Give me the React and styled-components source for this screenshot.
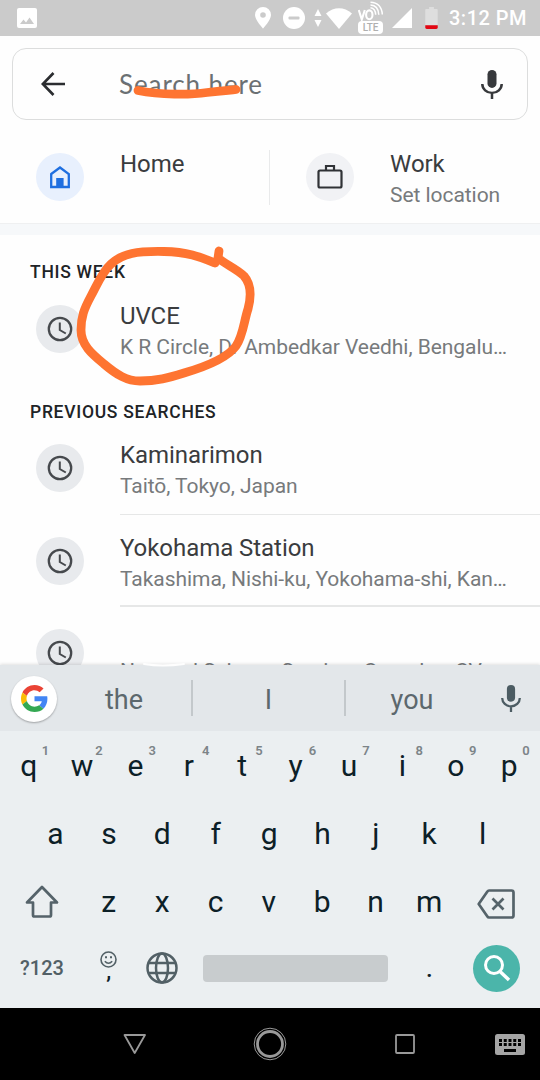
import React from 'react';
import styled, { createGlobalStyle } from 'styled-components';

const Global = createGlobalStyle`
  * { box-sizing: border-box; }
  body { margin: 0; background: #fff; font-family: Roboto, sans-serif; }
  svg { display: block; flex: none; }
`;

const Screen = styled.main`
  position: relative;
  width: 540px;
  height: 1080px;
  overflow: hidden;
  display: flex;
  flex-direction: column;
  background: #fefefe;
`;

const StatusBar = styled.header`
  height: 36px;
  flex: none;
  display: flex;
  align-items: center;
  justify-content: space-between;
  padding: 0 13px 0 17px;
  background: #cbcbcb;
  color: #fff;
`;
const StatusGroup = styled.div`
  display: flex;
  align-items: center;
`;
const StatusIcon = styled.svg`
  margin-right: ${(p) => p.$gap || 0}px;
`;
const VoLte = styled.div`
  width: 26px;
  height: 34px;
  margin-right: 8px;
  display: flex;
  flex-direction: column;
`;
const LteTag = styled.span`
  height: 13px;
  width: 25px;
  border-radius: 4px;
  background: #fff;
  color: #b0b0b0;
  font: 500 10px/13px Roboto, sans-serif;
  letter-spacing: -0.2px;
  text-align: center;
`;
const Time = styled.span`
  width: 78px;
  font: 500 20px/36px Roboto, sans-serif;
  letter-spacing: 0.5px;
  white-space: nowrap;
`;

const SearchBox = styled.div`
  height: 72px;
  flex: none;
  margin: 12px 12px 0;
  padding: 0 24px 0 28px;
  border: 1.5px solid #dcdddd;
  border-radius: 14px;
  display: flex;
  align-items: center;
`;
const SearchText = styled.span`
  flex: 1;
  margin-left: 54px;
  font: 400 26px/36px Lato, sans-serif;
  letter-spacing: 0.9px;
  color: #6b7073;
`;

const Shortcuts = styled.section`
  height: 103px;
  flex: none;
  display: flex;
`;
const Shortcut = styled.div`
  width: 270px;
  padding: 29px 0 0 36px;
  display: flex;
`;
const ShortcutRule = styled.div`
  width: 1px;
  height: 55px;
  margin: 30px 0 0 -1px;
  background: #e9eaeb;
`;
const Badge = styled.div`
  width: 48px;
  height: 48px;
  flex: none;
  margin-top: ${(p) => p.$top || 0}px;
  border-radius: 50%;
  display: flex;
  align-items: center;
  justify-content: center;
  background: ${(p) => p.$tone || '#e8eaed'};
`;
const Labels = styled.div`
  min-width: 0;
  margin-left: 36px;
`;
const Title = styled.div`
  height: 30px;
  font-size: 24px;
  line-height: 30px;
  letter-spacing: -0.05px;
  color: #3a3c3e;
  white-space: nowrap;
`;
const Subtitle = styled.div`
  font-size: 21px;
  line-height: 32px;
  letter-spacing: -0.05px;
  color: #777a7c;
  white-space: nowrap;
`;

const Band = styled.div`
  height: 12px;
  flex: none;
  background: #f6f8fa;
  border-top: 1px solid #eff0f1;
`;

const Results = styled.section`
  height: 430px;
  flex: none;
  overflow: hidden;
`;
const SectionHead = styled.h2`
  margin: 0;
  height: ${(p) => p.$height}px;
  padding: ${(p) => p.$top}px 0 0 30px;
  font: 500 17.5px/22px Roboto, sans-serif;
  letter-spacing: 0.72px;
  color: #202326;
`;
const Result = styled.div`
  height: ${(p) => p.$height || 92.5}px;
  padding-left: 36px;
  display: flex;
`;
const ResultBody = styled.div`
  flex: 1;
  min-width: 0;
  margin-left: 36px;
  padding-top: 18px;
  border-bottom: ${(p) => (p.$rule ? `${p.$rule}px solid #e6e7e7` : '0')};
`;
const Erased = styled.span`
  background: #fefefe;
  color: transparent;
`;

const Keyboard = styled.section`
  height: 343px;
  flex: none;
  background: #ebeff1;
  box-shadow: 0 -1px 3px rgba(0, 0, 0, 0.12);
  position: relative;
`;
const Suggestions = styled.div`
  height: 66px;
  display: flex;
  align-items: center;
  background: #e3e7ea;
  padding: 0 19px 0 11px;
`;
const GoogleButton = styled.div`
  width: 46px;
  height: 46px;
  margin-top: 1px;
  border-radius: 50%;
  background: #fff;
  box-shadow: 0 1px 2px rgba(0, 0, 0, 0.3);
  display: flex;
  align-items: center;
  justify-content: center;
`;
const Word = styled.span`
  width: ${(p) => p.$width}px;
  padding-top: 4px;
  text-align: center;
  font-size: 27px;
  line-height: 34px;
  color: #5c686d;
`;
const WordRule = styled.i`
  width: 2px;
  height: 36px;
  background: #c3c8cb;
`;
const KeyRow = styled.div`
  height: 68.5px;
  padding: 0 ${(p) => p.$side || 2}px ${(p) => p.$lift || 0}px;
  display: flex;
  align-items: center;
`;
const Key = styled.div`
  position: relative;
  width: 53.4px;
  flex: none;
  text-align: center;
  font-size: 30px;
  line-height: 69px;
  color: #0c2027;
`;
const Hint = styled.sup`
  position: absolute;
  left: 37.5px;
  top: 12px;
  width: 12px;
  font: 600 13px/16px Roboto, sans-serif;
  color: #7c8488;
`;
const SymbolKey = styled.div`
  width: 80px;
  text-align: center;
  font: 500 20px/30px Roboto, sans-serif;
  color: #526066;
`;
const IconKey = styled.div`
  width: ${(p) => p.$width}px;
  padding-top: ${(p) => p.$drop || 0}px;
  display: flex;
  flex-direction: column;
  align-items: center;
`;
const Comma = styled.span`
  height: 18px;
  font: 500 22px/8px Roboto, sans-serif;
  color: #0c2027;
`;
const Space = styled.div`
  width: 185px;
  height: 27px;
  margin-left: 14px;
  border-radius: 4px;
  background: #c8ccce;
`;
const Period = styled.div`
  width: 83px;
  padding-top: 2px;
  text-align: center;
  font: 500 24px/30px Roboto, sans-serif;
  color: #0c2027;
`;
const Go = styled.div`
  width: 47px;
  height: 47px;
  margin-left: 2.5px;
  border-radius: 50%;
  background: #4bb5aa;
  display: flex;
  align-items: center;
  justify-content: center;
`;

const NavBar = styled.nav`
  height: 72px;
  flex: none;
  background: #000;
  display: flex;
  align-items: center;
  padding: 0 15px 0 123px;
`;
const NavIcon = styled.svg`
  margin-right: ${(p) => p.$gap || 0}px;
`;

const Ink = styled.svg`
  position: absolute;
  left: 0;
  top: 0;
  pointer-events: none;
`;

const Mic = ({ color, width, height }) => (
  <svg width={width} height={height} viewBox="0 0 22 30" preserveAspectRatio="none">
    <rect x="6.5" y="0" width="9" height="18.5" rx="4.5" fill={color} />
    <path d="M1.3 14.5a9.7 9.2 0 0 0 19.4 0M11 23.5V30" fill="none" stroke={color} strokeWidth="2.5" />
  </svg>
);

const Clock = () => (
  <svg width="26" height="26" viewBox="0 0 26 26" fill="none" stroke="#46494d">
    <circle cx="13" cy="13" r="11.2" strokeWidth="2.3" />
    <path d="M12.8 6.5V14l6 3.5" strokeWidth="2" />
  </svg>
);

const Item = ({ title, sub, rule, height, iconTop = 22 }) => (
  <Result $height={height}>
    <Badge $top={iconTop}><Clock /></Badge>
    <ResultBody $rule={rule}>
      <Title>{title}</Title>
      <Subtitle>{sub}</Subtitle>
    </ResultBody>
  </Result>
);

export default function App() {
  return (
    <Screen>
      <Global />
      <StatusBar>
        <svg width="20" height="20" viewBox="0 0 20 20">
          <rect width="20" height="20" rx="2" fill="#fff" />
          <path d="M3 16l3.500-4.500 2.500 3 3.500-5 4.500 6.500z" fill="#cbcbcb" />
        </svg>
        <StatusGroup>
          <StatusIcon $gap={12} width="16" height="22" viewBox="0 0 16 22">
            <path fillRule="evenodd" d="M8 0a8 8 0 0 1 8 8c0 5-8 13.500-8 13.500S0 13 0 8a8 8 0 0 1 8-8zm0 5.200a2.800 2.800 0 1 0 0 5.600 2.800 2.800 0 0 0 0-5.600z" fill="#fff" />
          </StatusIcon>
          <StatusIcon $gap={9} width="22" height="22" viewBox="0 0 22 22">
            <circle cx="11" cy="11" r="11" fill="#fff" />
            <rect x="5.500" y="9.500" width="11" height="3" rx="1" fill="#cbcbcb" />
          </StatusIcon>
          <StatusIcon $gap={4} width="8" height="18" viewBox="0 0 8 18">
            <path d="M4 0l3.500 7h-7zM4 18l3.500-7h-7z" fill="#fff" />
          </StatusIcon>
          <StatusIcon $gap={6} width="26" height="21" viewBox="0 0 26 21">
            <path d="M0 5.500C8-1.500 18-1.500 26 5.500L13 21z" fill="#fff" />
          </StatusIcon>
          <VoLte>
            <svg width="26" height="20" viewBox="0 0 26 20" fill="none" stroke="#fff">
              <path d="M0.800 9l3 9.500 3-9.500" strokeWidth="2.100" />
              <ellipse cx="11.300" cy="13.800" rx="3.200" ry="4.400" strokeWidth="2.100" />
              <path d="M12.500 6.800c3.200.4 5 3 5.200 7M12.500 4c5 .2 8 4 8.300 9.700M12.500 1.200C19.500 1.200 24 6 24.300 13.500" strokeWidth="1.500" />
            </svg>
            <LteTag>LTE</LteTag>
          </VoLte>
          <StatusIcon $gap={13} width="20" height="20" viewBox="0 0 20 20">
            <path d="M20 0v20H0z" fill="#fff" />
          </StatusIcon>
          <StatusIcon $gap={11} width="13" height="22" viewBox="0 0 13 23">
            <path d="M4 0h5v2h3q1 0 1 1v16H0V3q0-1 1-1h3z" fill="#dedede" />
            <path d="M0 19h13v2.500q0 1.500-1.500 1.500h-10Q0 23 0 21.500z" fill="#e30613" />
          </StatusIcon>
          <Time>3:12 PM</Time>
        </StatusGroup>
      </StatusBar>

      <SearchBox>
        <svg width="24" height="24" viewBox="0 0 24 24" fill="none" stroke="#2b2d30" strokeWidth="2.700">
          <path d="M24 12H2M12.500 1L1.800 12l10.700 11" />
        </svg>
        <SearchText>Search here</SearchText>
        <Mic color="#37393c" width={22} height={29} />
      </SearchBox>

      <Shortcuts>
        <Shortcut>
          <Badge $tone="#e8f0fd" $top={4}>
            <svg width="20" height="24" viewBox="0 0 20 24">
              <path d="M1.200 9L10 2.500 18.800 9v13H1.200z" fill="none" stroke="#1f6fe0" strokeWidth="2.300" />
              <rect x="6.200" y="13" width="7.400" height="9" fill="#1f6fe0" />
            </svg>
          </Badge>
          <Labels>
            <Title>Home</Title>
          </Labels>
        </Shortcut>
        <ShortcutRule />
        <Shortcut>
          <Badge $tone="#f1f2f5" $top={4}>
            <svg width="26" height="26" viewBox="0 0 26 26" fill="none" stroke="#303236" strokeWidth="2.200">
              <rect x="1.500" y="6.500" width="23" height="17" rx="1.500" />
              <path d="M9 6.500V2h8v4.500" />
            </svg>
          </Badge>
          <Labels>
            <Title>Work</Title>
            <Subtitle>Set location</Subtitle>
          </Labels>
        </Shortcut>
      </Shortcuts>

      <Band />

      <Results>
        <SectionHead $top={26} $height={48}>THIS WEEK</SectionHead>
        <Item height={93} title="UVCE" iconTop={21.7} sub="K R Circle, Dr Ambedkar Veedhi, Bengalu…" />
        <SectionHead $top={25} $height={46}>PREVIOUS SEARCHES</SectionHead>
        <Item rule={1} title="Kaminarimon" sub="Taitō, Tokyo, Japan" />
        <Item rule={2} title="Yokohama Station" sub="Takashima, Nishi-ku, Yokohama-shi, Kan…" />
        <Item sub={<>N<Erased>ationa</Erased>l Science Seminar Complex, CV…</>} />
      </Results>

      <Keyboard>
        <Suggestions>
          <GoogleButton>
            <svg width="27" height="27" viewBox="0 0 48 48">
              <path fill="#EA4335" d="M24 9.500c3.540 0 6.710 1.220 9.210 3.600l6.850-6.850C35.900 2.380 30.470 0 24 0 14.620 0 6.510 5.380 2.560 13.220l7.980 6.190C12.430 13.720 17.740 9.500 24 9.500z" />
              <path fill="#4285F4" d="M46.980 24.550c0-1.570-.15-3.090-.38-4.550H24v9.020h12.940c-.58 2.960-2.260 5.480-4.780 7.180l7.730 6c4.510-4.180 7.090-10.360 7.090-17.650z" />
              <path fill="#FBBC05" d="M10.530 28.590c-.48-1.450-.76-2.990-.76-4.590s.27-3.140.76-4.590l-7.980-6.190C.92 16.460 0 20.120 0 24c0 3.880.92 7.540 2.560 10.780l7.970-6.190z" />
              <path fill="#34A853" d="M24 48c6.480 0 11.930-2.130 15.890-5.810l-7.730-6c-2.150 1.450-4.920 2.300-8.160 2.300-6.260 0-11.570-4.220-13.470-9.910l-7.980 6.190C6.510 42.620 14.620 48 24 48z" />
            </svg>
          </GoogleButton>
          <Word $width={134}>the</Word>
          <WordRule />
          <Word $width={151}>I</Word>
          <WordRule />
          <Word $width={132}>you</Word>
          <svg width="22.500" height="1" />
          <Mic color="#4c5c63" width={20} height={27} />
        </Suggestions>
        <KeyRow>
          {[...'qwertyuiop'].map((k, i) => (
            <Key key={k}>{k}<Hint>{(i + 1) % 10}</Hint></Key>
          ))}
        </KeyRow>
        <KeyRow $side={28.8}>
          {[...'asdfghjkl'].map((k) => <Key key={k}>{k}</Key>)}
        </KeyRow>
        <KeyRow $lift={1}>
          <IconKey $width={80}>
            <svg width="34" height="33" viewBox="0 0 34 33" fill="none" stroke="#55636a" strokeWidth="2.700" strokeLinejoin="round">
              <path d="M17 2L32 17.500h-6V30q0 1.500-1.500 1.500h-15Q8 31.500 8 30V17.500H2z" />
            </svg>
          </IconKey>
          {[...'zxcvbnm'].map((k) => <Key key={k}>{k}</Key>)}
          <IconKey $width={80} $drop={4}>
            <svg width="38" height="30" viewBox="0 0 38 30" fill="none" stroke="#55636a" strokeWidth="2.700">
              <path d="M12 1.500h22.500q2 0 2 2v23q0 2-2 2H12q-1 0-1.600-1L1.700 15 10.400 2.500q.6-1 1.600-1z" strokeLinejoin="round" />
              <path d="M15.500 9.500l11 11M26.500 9.500l-11 11" />
            </svg>
          </IconKey>
        </KeyRow>
        <KeyRow $lift={5}>
          <SymbolKey>?123</SymbolKey>
          <IconKey $width={53.4}>
            <svg width="17" height="17" viewBox="0 0 17 17" fill="none" stroke="#526066" strokeWidth="1.600">
              <circle cx="8.500" cy="8.500" r="7.500" />
              <path d="M4.800 10.200q3.700 4 7.400 0" />
              <path d="M5 6.300h2M10 6.300h2" strokeWidth="2" />
            </svg>
            <Comma>,</Comma>
          </IconKey>
          <IconKey $width={53.4}>
            <svg width="32" height="32" viewBox="0 0 32 32" fill="none" stroke="#526066" strokeWidth="2.500">
              <circle cx="16" cy="16" r="14.500" />
              <ellipse cx="16" cy="16" rx="6" ry="14.500" />
              <path d="M2.500 11h27M2.500 21h27" />
            </svg>
          </IconKey>
          <Space />
          <Period>.</Period>
          <Go>
            <svg width="28" height="28" viewBox="0 0 28 28" fill="none" stroke="#fff" strokeWidth="3">
              <circle cx="11" cy="11" r="8.500" />
              <path d="M16.500 17L26 26" strokeWidth="3.500" />
            </svg>
          </Go>
        </KeyRow>
      </Keyboard>

      <NavBar>
        <NavIcon $gap={105.5} width="24" height="22" viewBox="0 0 24 22" fill="none" stroke="#999" strokeWidth="1.800" strokeLinejoin="round">
          <path d="M1.500 2h20.500L11.700 20z" />
        </NavIcon>
        <NavIcon $gap={108} width="34" height="34" viewBox="0 0 34 34" fill="none" stroke="#999">
          <circle cx="17" cy="17" r="15.800" strokeWidth="1" />
          <circle cx="17" cy="17" r="12.500" strokeWidth="2.800" />
        </NavIcon>
        <NavIcon $gap={80.5} width="20" height="20" viewBox="0 0 20 20" fill="none" stroke="#999" strokeWidth="1.800">
          <rect x="1" y="1" width="18" height="18" rx="1" />
        </NavIcon>
        <NavIcon width="30" height="21" viewBox="0 0 30 21">
          <rect width="30" height="21" rx="2.500" fill="#a5a5a5" />
          <path d="M4 6.500h22M4 10.500h22" stroke="#000" strokeWidth="3" strokeDasharray="3 1.750" />
          <path d="M9 16.500h12" stroke="#000" strokeWidth="3" />
        </NavIcon>
      </NavBar>

      <Ink width="540" height="1080" viewBox="0 0 540 1080" fill="none" stroke="#fe7431" strokeLinecap="round" strokeLinejoin="round">
        <path d="M144 664Q162 667 184 664" stroke="#fefefe" strokeWidth="2" />
        <path d="M138 90.500C160 95 190 95 207 92.500S230 90.500 236 89.500" strokeWidth="8.800" />
        <path d="M215 263C200 257 188 252 164 251.500C137 251 123 253 111 264C102 272 97 285 91 296C84 309 81 317 81 330C81 345 92 354 104 364C117 375 127 381 140 381C157 381 168 378 184 373C208 366 228 357 236 346C243 336 244 321 248 309C252 294 251 284 244 276C237 269 225 264 218 258L219 251" strokeWidth="8.800" />
      </Ink>
    </Screen>
  );
}
